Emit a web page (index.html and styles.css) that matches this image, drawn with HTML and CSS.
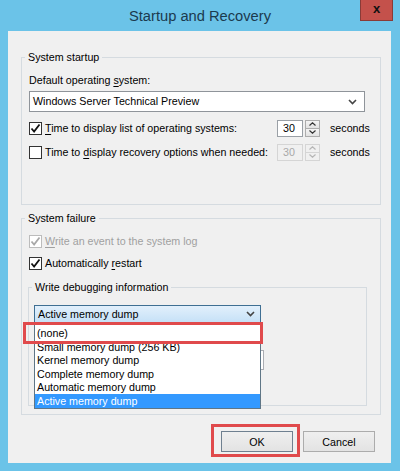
FILE: index.html
```html
<!DOCTYPE html>
<html lang="en">
<head>
  <meta charset="UTF-8">
  <title>Startup and Recovery</title>
  <link rel="stylesheet" href="styles.css">
</head>
<body>
  <div class="window">
    <!-- Barra de título -->
    <div class="titlebar">
      <span class="title">Startup and Recovery</span>
      <span class="close">x</span>
    </div>

    <div class="client">
      <!-- System startup -->
      <fieldset class="group startup">
        <legend>System startup</legend>
        <div class="field-label">Default operating <u>s</u>ystem:</div>
        <div class="select os-select">
          <span>Windows Server Technical Preview</span>
          <svg class="chevron" width="9" height="6" viewBox="0 0 9 6"><path d="M1 1l3.5 3.5L8 1" fill="none" stroke="#444" stroke-width="1.6"/></svg>
        </div>
        <div class="row timed">
          <label class="check">
            <span class="box"><svg width="11" height="11" viewBox="0 0 11 11"><path d="M1.5 5.5l2.6 3L9.5 1.5" fill="none" stroke="#111" stroke-width="1.8"/></svg></span>
            <span><u>T</u>ime to display list of operating systems:</span>
          </label>
          <div class="spinner">
            <span class="spin-value">30</span>
            <span class="spin-btns">
              <span class="spin-btn"><svg width="7" height="4" viewBox="0 0 7 4"><path d="M0.5 3.5L3.5 0.8L6.5 3.5" fill="none" stroke="#333" stroke-width="1.2"/></svg></span>
              <span class="spin-btn"><svg width="7" height="4" viewBox="0 0 7 4"><path d="M0.5 0.5L3.5 3.2L6.5 0.5" fill="none" stroke="#333" stroke-width="1.2"/></svg></span>
            </span>
          </div>
          <span class="unit">seconds</span>
        </div>
        <div class="row timed">
          <label class="check">
            <span class="box"></span>
            <span>Time to <u>d</u>isplay recovery options when needed:</span>
          </label>
          <div class="spinner disabled">
            <span class="spin-value">30</span>
            <span class="spin-btns">
              <span class="spin-btn"><svg width="7" height="4" viewBox="0 0 7 4"><path d="M0.5 3.5L3.5 0.8L6.5 3.5" fill="none" stroke="#b5b5b5" stroke-width="1.2"/></svg></span>
              <span class="spin-btn"><svg width="7" height="4" viewBox="0 0 7 4"><path d="M0.5 0.5L3.5 3.2L6.5 0.5" fill="none" stroke="#b5b5b5" stroke-width="1.2"/></svg></span>
            </span>
          </div>
          <span class="unit">seconds</span>
        </div>
      </fieldset>

      <!-- System failure -->
      <fieldset class="group failure">
        <legend>System failure</legend>
        <div class="row">
          <label class="check disabled">
            <span class="box"><svg width="11" height="11" viewBox="0 0 11 11"><path d="M1.5 5.5l2.6 3L9.5 1.5" fill="none" stroke="#a8a8a8" stroke-width="1.8"/></svg></span>
            <span><u>W</u>rite an event to the system log</span>
          </label>
        </div>
        <div class="row">
          <label class="check">
            <span class="box"><svg width="11" height="11" viewBox="0 0 11 11"><path d="M1.5 5.5l2.6 3L9.5 1.5" fill="none" stroke="#111" stroke-width="1.8"/></svg></span>
            <span>Automatically <u>r</u>estart</span>
          </label>
        </div>

        <fieldset class="group debug">
          <legend>Write debugging information</legend>
          <div class="combo-wrap">
            <div class="select combo open">
              <span>Active memory dump</span>
              <svg class="chevron" width="9" height="6" viewBox="0 0 9 6"><path d="M1 1l3.5 3.5L8 1" fill="none" stroke="#444" stroke-width="1.6"/></svg>
            </div>
            <!-- Lista aberta do combo -->
            <ul class="dropdown">
              <li>(none)</li>
              <li>Small memory dump (256 KB)</li>
              <li>Kernel memory dump</li>
              <li>Complete memory dump</li>
              <li>Automatic memory dump</li>
              <li class="selected">Active memory dump</li>
            </ul>
            <div class="highlight none-mark"></div>
          </div>
          <!-- Caixa do arquivo de despejo, quase toda coberta pela lista -->
          <div class="textbox"></div>
        </fieldset>
      </fieldset>

      <!-- Botões -->
      <div class="buttons">
        <div class="btn-wrap">
          <button class="btn default">OK</button>
          <div class="highlight ok-mark"></div>
        </div>
        <button class="btn">Cancel</button>
      </div>
    </div>
  </div>
</body>
</html>
```

FILE: styles.css
```css
/* Janela no estilo Windows 8 */
body {
  margin: 0;
  background-color: #6bc3e8;
  font-family: "Liberation Sans", Arial, sans-serif;
  font-size: 10.7px;
  line-height: 15px;
  color: #000;
}
.window {
  width: 400px;
  height: 471px;
}
.titlebar {
  position: relative;
  height: 31px;
  display: flex;
  align-items: center;
  justify-content: center;
}
.title {
  font-size: 14.7px;
  color: #1b3a4e;
  padding-top: 1px;
}
.close {
  position: absolute;
  top: 0;
  left: 360px;
  width: 31px;
  height: 20px;
  background-color: #c4514b;
  border: 1px solid #8a3b37;
  border-top: none;
  color: #111;
  font-weight: bold;
  font-size: 13px;
  line-height: 18px;
  text-align: center;
}
.client {
  margin: 0 9px 8px 8px;
  height: 432px;
  box-sizing: border-box;
  background-color: #f0f0f0;
  padding: 19px 10px 0 13px;
}
u {
  text-decoration-thickness: 1px;
  text-underline-offset: 2px;
}

/* Grupos */
.group {
  margin: 0;
  border: 1px solid #d5dbe0;
  padding: 8px 7px 41px 7px;
  min-width: 0;
}
.group legend {
  padding: 0 3px;
  margin-left: -4px;
  line-height: 15px;
}
.failure {
  margin-top: 6px;
  padding: 4px 7px 8px 7px;
}
.debug {
  margin: 6px 6px 0 -1px;
  padding: 10px 5px 35px 5px;
}
.debug legend {
  margin-left: -2px;
}
.field-label {
  line-height: 14px;
}

/* Campos */
.select {
  display: flex;
  align-items: center;
  justify-content: space-between;
  box-sizing: border-box;
  background-color: #fff;
  border: 1px solid #8f949a;
  padding: 0 7px 0 3px;
}
.os-select {
  margin-top: 4px;
  width: 336px;
  height: 21px;
}
.row {
  display: flex;
  align-items: center;
  height: 22px;
}
.os-select + .row {
  margin-top: 5px;
}
.timed + .timed {
  margin-top: 2px;
}
.timed {
  display: grid;
  grid-template-columns: 248px 44px auto;
}
.check {
  display: flex;
  align-items: center;
  gap: 3px;
  white-space: nowrap;
}
.box {
  flex-shrink: 0;
  width: 11px;
  height: 11px;
  border: 1px solid #333;
  background-color: #fff;
  display: flex;
  align-items: center;
  justify-content: center;
}
.check.disabled {
  color: #a0a0a0;
}
.check.disabled .box {
  border-color: #bcbcbc;
}
.spinner {
  display: flex;
  height: 17px;
}
.spin-value {
  width: 26px;
  box-sizing: border-box;
  border: 1px solid #9aa0a6;
  background-color: #fff;
  padding-left: 5px;
  line-height: 15px;
}
.spin-btns {
  display: flex;
  flex-direction: column;
  width: 15px;
  margin-left: 2px;
}
.spin-btn {
  flex: 1;
  display: flex;
  align-items: center;
  justify-content: center;
  background: linear-gradient(#f4f4f4, #e2e2e2);
  border: 1px solid #acacac;
}
.spin-btn + .spin-btn {
  border-top: none;
}
.spinner.disabled .spin-value {
  background-color: #f0f0f0;
  border-color: #d5d5d5;
  color: #a8a8a8;
}
.spinner.disabled .spin-btn {
  background: #f0f0f0;
  border-color: #d5d5d5;
}
.unit {
  margin-left: 9px;
}

/* Combo aberto */
.combo-wrap {
  position: relative;
}
.combo {
  width: 227px;
  height: 18px;
  background: linear-gradient(#e2f0fc, #c6e1f7);
  border-color: #3f6f93;
  padding: 0 5px 0 3px;
}
.dropdown {
  position: absolute;
  top: 18px;
  left: 0;
  width: 227px;
  box-sizing: border-box;
  margin: 0;
  padding: 0;
  list-style: none;
  background-color: #fff;
  border: 1px solid #5f7686;
  z-index: 2;
}
.dropdown li {
  line-height: 13.3px;
  padding-left: 2px;
}
.dropdown li:first-child {
  line-height: 16px;
  padding-top: 1px;
}
.dropdown .selected {
  background-color: #3399ff;
  color: #fff;
  line-height: 14px;
}
.textbox {
  margin-top: 27px;
  width: 230px;
  height: 20px;
  box-sizing: border-box;
  border: 1px solid #abadb3;
  background-color: #fff;
}

/* Marcas vermelhas */
.highlight {
  position: absolute;
  border: 3px solid #e04a4c;
  box-sizing: border-box;
  z-index: 3;
}
.none-mark {
  left: -11px;
  top: 17px;
  width: 240px;
  height: 22px;
}
.ok-mark {
  left: -10px;
  top: -7px;
  width: 89px;
  height: 33px;
}

/* Botões */
.buttons {
  display: flex;
  justify-content: flex-end;
  gap: 10px;
  margin: 16px 6px 0 0;
}
.btn-wrap {
  position: relative;
  display: flex;
}
.btn {
  width: 72px;
  height: 21px;
  font-family: inherit;
  font-size: 10.7px;
  padding: 0;
  background: linear-gradient(#efefef, #e3e3e3);
  border: 1px solid #acacac;
  color: #000;
}
.btn.default {
  border-color: #6f8090;
}
```
